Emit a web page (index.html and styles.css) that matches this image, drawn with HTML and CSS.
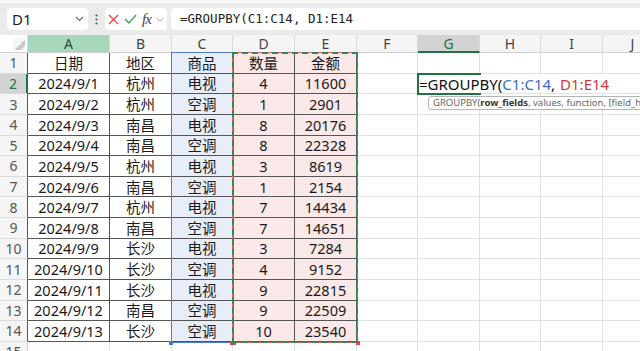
FILE: index.html
```html
<!DOCTYPE html>
<html lang="zh-CN">
<head>
  <meta charset="UTF-8">
  <title>GROUPBY</title>
  <link rel="stylesheet" href="styles.css">
</head>
<body>

  <div class="toolbar">
    <div class="namebox">
      <span>D1</span>
      <svg width="9" height="6" viewBox="0 0 9 6"><path d="M1 1l3.5 3.5L8 1" fill="none" stroke="#666" stroke-width="1.1"/></svg>
    </div>
    <div class="dots">
      <svg width="3" height="11" viewBox="0 0 3 11"><circle cx="1.5" cy="1.5" r="1.1" fill="#555"/><circle cx="1.5" cy="5.5" r="1.1" fill="#555"/><circle cx="1.5" cy="9.5" r="1.1" fill="#555"/></svg>
    </div>
    <div class="fxbox">
      <svg width="11" height="11" viewBox="0 0 11 11"><path d="M1 1l9 9M10 1l-9 9" stroke="#e0474c" stroke-width="1.3"/></svg>
      <svg width="13" height="10" viewBox="0 0 13 10"><path d="M1 5l4 4 7-8" fill="none" stroke="#3c9a5f" stroke-width="1.3"/></svg>
      <span class="fx">fx</span>
      <svg width="8" height="5" viewBox="0 0 8 5"><path d="M1 1l3 3 3-3" fill="none" stroke="#aaa" stroke-width="1"/></svg>
    </div>
    <div class="formula">=GROUPBY(C1:C14, D1:E14</div>
  </div>

  <div class="sheet">
    <table class="grid">
      <colgroup>
        <col class="w-head"><col class="w-a"><col class="w-b"><col class="w-c"><col class="w-d"><col class="w-e"><col class="w-f"><col class="w-g"><col class="w-h"><col class="w-i"><col class="w-j">
      </colgroup>
      <thead>
        <tr>
          <th class="corner"></th><th class="col-sel">A</th><th>B</th><th>C</th><th>D</th><th>E</th><th>F</th><th class="col-act">G</th><th>H</th><th>I</th><th>J</th>
        </tr>
      </thead>
      <tbody>
        <tr><th class="rh">1</th><td class="t">日期</td><td class="t">地区</td><td class="t c">商品</td><td class="t d">数量</td><td class="t d">金额</td><td></td><td></td><td></td><td></td><td></td></tr>
        <tr><th class="rh row-act">2</th><td class="t">2024/9/1</td><td class="t">杭州</td><td class="t c">电视</td><td class="t d">4</td><td class="t d">11600</td><td></td><td></td><td></td><td></td><td></td></tr>
        <tr><th class="rh">3</th><td class="t">2024/9/2</td><td class="t">杭州</td><td class="t c">空调</td><td class="t d">1</td><td class="t d">2901</td><td></td><td></td><td></td><td></td><td></td></tr>
        <tr><th class="rh">4</th><td class="t">2024/9/3</td><td class="t">南昌</td><td class="t c">电视</td><td class="t d">8</td><td class="t d">20176</td><td></td><td></td><td></td><td></td><td></td></tr>
        <tr><th class="rh">5</th><td class="t">2024/9/4</td><td class="t">南昌</td><td class="t c">空调</td><td class="t d">8</td><td class="t d">22328</td><td></td><td></td><td></td><td></td><td></td></tr>
        <tr><th class="rh">6</th><td class="t">2024/9/5</td><td class="t">杭州</td><td class="t c">电视</td><td class="t d">3</td><td class="t d">8619</td><td></td><td></td><td></td><td></td><td></td></tr>
        <tr><th class="rh">7</th><td class="t">2024/9/6</td><td class="t">南昌</td><td class="t c">空调</td><td class="t d">1</td><td class="t d">2154</td><td></td><td></td><td></td><td></td><td></td></tr>
        <tr><th class="rh">8</th><td class="t">2024/9/7</td><td class="t">杭州</td><td class="t c">电视</td><td class="t d">7</td><td class="t d">14434</td><td></td><td></td><td></td><td></td><td></td></tr>
        <tr><th class="rh">9</th><td class="t">2024/9/8</td><td class="t">南昌</td><td class="t c">空调</td><td class="t d">7</td><td class="t d">14651</td><td></td><td></td><td></td><td></td><td></td></tr>
        <tr><th class="rh">10</th><td class="t">2024/9/9</td><td class="t">长沙</td><td class="t c">电视</td><td class="t d">3</td><td class="t d">7284</td><td></td><td></td><td></td><td></td><td></td></tr>
        <tr><th class="rh">11</th><td class="t">2024/9/10</td><td class="t">长沙</td><td class="t c">空调</td><td class="t d">4</td><td class="t d">9152</td><td></td><td></td><td></td><td></td><td></td></tr>
        <tr><th class="rh">12</th><td class="t">2024/9/11</td><td class="t">长沙</td><td class="t c">电视</td><td class="t d">9</td><td class="t d">22815</td><td></td><td></td><td></td><td></td><td></td></tr>
        <tr><th class="rh">13</th><td class="t">2024/9/12</td><td class="t">南昌</td><td class="t c">空调</td><td class="t d">9</td><td class="t d">22509</td><td></td><td></td><td></td><td></td><td></td></tr>
        <tr><th class="rh">14</th><td class="t">2024/9/13</td><td class="t">长沙</td><td class="t c">空调</td><td class="t d">10</td><td class="t d">23540</td><td></td><td></td><td></td><td></td><td></td></tr>
        <tr><th>15</th><td></td><td></td><td></td><td></td><td></td><td></td><td></td><td></td><td></td><td></td></tr>
      </tbody>
    </table>

    <!-- rangos resaltados por la fórmula -->
    <div class="range-c"></div>
    <div class="range-de"><div class="marquee"></div></div>

    <!-- celda G2 en edición -->
    <div class="editbox"></div>
    <div class="editor">=GROUPBY(<span class="ref-c">C1:C14</span>,<span class="ref-d">D1:E14</span></div>
    <div class="hint">GROUPBY(<b>row_fields</b>, values, function, [field_headers], [total_depth])</div>
  </div>

</body>
</html>
```

FILE: styles.css
```css
body {
  margin: 0;
  background-color: #fff;
  font-family: "Noto Sans", "Noto Sans CJK SC", sans-serif;
  overflow: hidden;
}
.toolbar {
  height: 35px;
  box-sizing: border-box;
  background-color: #ebebeb;
  border-top: 3px solid #f8f8f8;
  padding: 5px 0 0 7px;
  display: flex;
  align-items: flex-start;
}
.namebox {
  width: 81px;
  height: 22px;
  box-sizing: border-box;
  background-color: #fff;
  border-radius: 4px;
  padding: 0 4px 0 5px;
  display: flex;
  align-items: center;
  justify-content: space-between;
  font-size: 15px;
  color: #222;
}
.dots {
  width: 17px;
  height: 22px;
  display: flex;
  align-items: center;
  justify-content: center;
}
.fxbox {
  width: 62px;
  height: 22px;
  box-sizing: border-box;
  background-color: #fff;
  border-radius: 4px;
  padding: 0 3px 0 3px;
  display: flex;
  align-items: center;
  justify-content: space-between;
}
.fx {
  font-family: "Liberation Serif", serif;
  font-style: italic;
  font-size: 15px;
  color: #444;
  letter-spacing: -1px;
}
.formula {
  flex: 1;
  height: 22px;
  margin-left: 4px;
  background-color: #fff;
  border-radius: 4px 0 0 4px;
  padding-left: 9px;
  font-family: "DejaVu Sans Mono", monospace;
  font-size: 12.5px;
  line-height: 22px;
  color: #222;
}

.sheet {
  position: relative;
  height: 316px;
  overflow: hidden;
}
.grid {
  table-layout: fixed;
  border-collapse: separate;
  border-spacing: 0;
  width: 663px;
}
.w-head { width: 28px; }
.w-a { width: 82px; }
.w-b { width: 62px; }
.w-c { width: 61px; }
.w-d { width: 62px; }
.w-e { width: 62px; }
.w-f { width: 61px; }
.w-g { width: 62px; }
.w-h { width: 61px; }
.w-i { width: 62px; }
.w-j { width: 60px; }

.grid th,
.grid td {
  box-sizing: border-box;
  padding: 0;
  border-right: 1px solid #e1e1e1;
  border-bottom: 1px solid #e1e1e1;
  text-align: center;
  white-space: nowrap;
}
.grid thead tr {
  height: 18px;
}
.grid thead th {
  background-color: #f5f5f5;
  border-right-color: #dadada;
  border-bottom-color: #d0d0d0;
  font-weight: normal;
  font-size: 14px;
  line-height: 15px;
  color: #444;
}
.grid thead th.corner {
  background: linear-gradient(135deg, #f5f5f5 55%, #c9c9c9 55%, #c9c9c9 80%, #f5f5f5 80%);
  background-size: 12px 12px;
  background-repeat: no-repeat;
  background-position: 13px 3px;
}
.grid thead th.col-sel {
  background-color: #a8d8bb;
  color: #2d4a3a;
}
.grid thead th.col-act {
  background-color: #d3d3d3;
  color: #217346;
  border-bottom: 2px solid #217346;
}
.grid tbody tr {
  height: 20.64px;
}
.grid tbody th {
  background-color: #f5f5f5;
  border-right-color: #d0d0d0;
  border-bottom-color: #dadada;
  font-weight: normal;
  font-size: 14px;
  color: #555;
}
.grid tbody th.rh {
  border-right-color: #5a5a5a;
}
.grid tbody th.row-act {
  background-color: #d3d3d3;
  color: #217346;
  border-right: 2px solid #217346;
}
.grid td {
  font-size: 14.5px;
  color: #1a1a1a;
  line-height: 18px;
}
.grid td.t {
  border-right-color: #555;
  border-bottom-color: #555;
}
.grid td.c {
  background-color: #e8eef9;
}
.grid td.d {
  background-color: #fbe8e8;
}

.range-c {
  position: absolute;
  left: 171px;
  top: 17px;
  width: 63px;
  height: 291px;
  box-sizing: border-box;
  border: 1px solid #4a7bd0;
}
.range-c::before,
.range-c::after {
  content: "";
  position: absolute;
  bottom: -3px;
  width: 4px;
  height: 4px;
  background-color: #4a7bd0;
}
.range-c::before { left: -3px; }
.range-c::after { right: -3px; }

.range-de {
  position: absolute;
  left: 232px;
  top: 17px;
  width: 126px;
  height: 291px;
  box-sizing: border-box;
  border: 1px solid #e06262;
}
.range-de::before,
.range-de::after {
  content: "";
  position: absolute;
  bottom: -3px;
  width: 4px;
  height: 4px;
  background-color: #d94444;
}
.range-de::before { left: -3px; }
.range-de::after { right: -3px; }
.marquee {
  position: absolute;
  top: -1px;
  left: -1px;
  right: -1px;
  bottom: -1px;
  border: 2px dashed #3a8352;
}

.editbox {
  position: absolute;
  left: 417px;
  top: 38px;
  width: 64px;
  height: 22px;
  box-sizing: border-box;
  border: 2px solid #217346;
}
.editor {
  position: absolute;
  left: 419px;
  top: 40px;
  height: 18px;
  padding-right: 4px;
  background-color: #fff;
  font-size: 15px;
  line-height: 18px;
  color: #111;
  white-space: nowrap;
}
.ref-c {
  color: #3b6fc7;
}
.ref-d {
  color: #cf3a3e;
  margin-left: 5px;
}
.hint {
  position: absolute;
  left: 428px;
  top: 61px;
  height: 14px;
  box-sizing: border-box;
  border: 1px solid #b5b5b5;
  border-radius: 3px;
  background-color: #fff;
  padding: 0 4px;
  font-size: 9.5px;
  line-height: 12px;
  color: #666;
  white-space: nowrap;
}
.hint b {
  color: #333;
}
```
